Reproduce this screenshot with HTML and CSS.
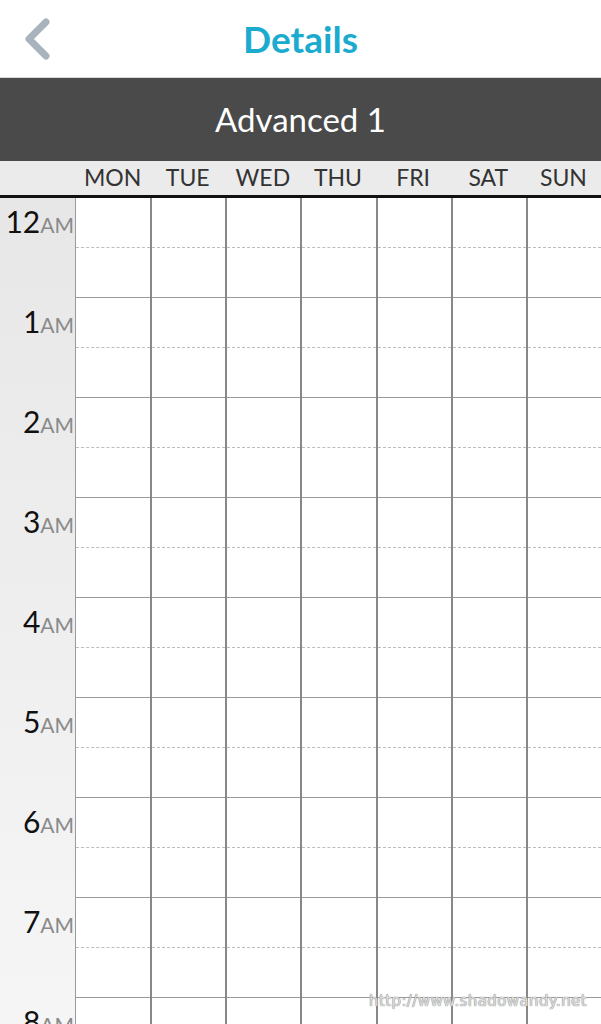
FILE: index.html
```html
<!DOCTYPE html>
<html>
<head>
<meta charset="utf-8">
<link rel="stylesheet" href="styles.css">
</head>
<body>
<div class="app">
  <header class="topbar">
    <svg class="back" width="60" height="70" viewBox="0 0 60 70"><polyline points="46,22 29,39 46,56" fill="none" stroke="#a8b3bd" stroke-width="7" stroke-linecap="round" stroke-linejoin="round"/></svg>
    <h1 class="title">Details</h1>
  </header>
  <div class="banner">Advanced 1</div>
  <div class="days">
    <div class="daycorner"></div>
    <div class="day">MON</div><div class="day">TUE</div><div class="day">WED</div><div class="day">THU</div><div class="day">FRI</div><div class="day">SAT</div><div class="day">SUN</div>
  </div>
  <div class="grid" id="grid"></div>
  <div class="watermark">http://www.shadowandy.net</div>
</div>
<script src="app.js"></script>
</body>
</html>
```

FILE: app.js
```js
var labels = ['12','1','2','3','4','5','6','7','8'];
var g = document.getElementById('grid');
labels.forEach(function (h) {
  var row = document.createElement('div');
  row.className = 'hour';
  var t = document.createElement('div');
  t.className = 'time';
  t.innerHTML = '<span class="num">' + h + '</span><span class="ampm">AM</span>';
  row.appendChild(t);
  for (var i = 0; i < 7; i++) {
    var c = document.createElement('div');
    c.className = 'cell' + (i === 0 ? ' first' : '');
    c.innerHTML = '<div class="half top"></div><div class="half"></div>';
    row.appendChild(c);
  }
  g.appendChild(row);
});
```

FILE: styles.css
```css
* { box-sizing: border-box; }
html, body { margin: 0; padding: 0; }
body { font-family: Lato, "Noto Sans", sans-serif; background: #fff; width: 601px; height: 1024px; overflow: hidden; }
.app { position: relative; width: 601px; height: 1024px; overflow: hidden; }
.topbar { height: 78px; display: flex; align-items: center; justify-content: center; position: relative; border-bottom: 1px solid #d8d8d8; }
.back { position: absolute; left: 0; top: 0; }
.title { margin: 0; font-size: 37px; font-weight: 700; color: #1aabcf; line-height: 1; }
.banner { height: 83px; background: #4a4a4a; color: #fff; font-size: 33px; display: flex; align-items: center; justify-content: center; padding-bottom: 2px; }
.days { display: grid; grid-template-columns: 75px repeat(7, 1fr); height: 37px; background: #ebebeb; border-bottom: 3px solid #111; }
.day { display: flex; align-items: center; justify-content: center; font-size: 23px; color: #333; padding-bottom: 2px; }
.grid { background: #fff linear-gradient(to bottom, #e7e7e7, #f7f7f7) no-repeat 0 0 / 75px 100%; }
.hour { display: grid; grid-template-columns: 75px repeat(7, 1fr); height: 100px; }
.time { display: flex; justify-content: flex-end; align-items: baseline; padding: 6px 1px 0 0; height: 40px; }
.num { font-size: 30px; color: #111; line-height: 34px; }
.ampm { font-size: 21px; color: #8a8a8a; line-height: 34px; }
.cell { border-left: 2px solid #888; display: flex; flex-direction: column; background: #fff; }
.cell.first { border-left: 1px solid #9a9a9a; }
.half { flex: 1; border-bottom: 1px solid #9a9a9a; }
.half.top { border-bottom: 1px dashed #bdbdbd; }
.watermark { position: absolute; right: 14px; bottom: 14px; font-family: "DejaVu Sans", sans-serif; font-size: 15px; color: #dcdcdc; text-shadow: 0 0 1px #888, 0 0 1px #888; letter-spacing: 0.4px; }
```
